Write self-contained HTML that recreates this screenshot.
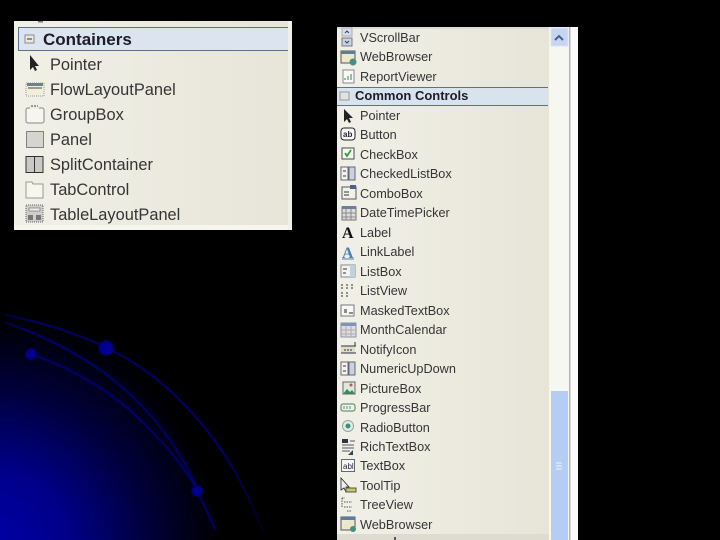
<!DOCTYPE html>
<html><head><meta charset="utf-8"><style>
html,body{margin:0;padding:0;background:#000;width:720px;height:540px;overflow:hidden}
body{position:relative;font-family:"Liberation Sans",sans-serif}
.t{position:absolute;white-space:nowrap;line-height:20px;color:#353535}
.l{font-size:16.400px;left:50px;filter:blur(.35px)}
.r{font-size:12.700px;left:360px;filter:blur(.35px)}
svg{position:absolute;left:0;top:0}
</style></head><body>
<svg width="720" height="540" viewBox="0 0 720 540">
<defs>
<radialGradient id="g" gradientUnits="userSpaceOnUse" cx="0" cy="0" r="1" gradientTransform="translate(-10 550) scale(230 235)">
<stop offset="0" stop-color="#0000a8"/><stop offset=".35" stop-color="#000088"/><stop offset=".7" stop-color="#000038"/><stop offset="1" stop-color="#000"/>
</radialGradient>
<radialGradient id="d"><stop offset="0" stop-color="#0000a0"/><stop offset=".7" stop-color="#000088"/><stop offset="1" stop-color="#000050"/></radialGradient>
<linearGradient id="lf" gradientUnits="userSpaceOnUse" x1="0" y1="0" x2="265" y2="0"><stop offset="0" stop-color="#000040"/><stop offset=".1" stop-color="#000078"/><stop offset=".85" stop-color="#000080"/><stop offset="1" stop-color="#000020"/></linearGradient>
<linearGradient id="pn" x1="0" x2="1" y1="0" y2="0"><stop offset="0" stop-color="#f1f0e7"/><stop offset="1" stop-color="#e7e5d8"/></linearGradient>
<filter id="b1"><feGaussianBlur stdDeviation=".6"/></filter>
<filter id="b2"><feGaussianBlur stdDeviation=".3"/></filter>
</defs>
<rect width="720" height="540" fill="#000"/>
<rect x="0" y="300" width="260" height="240" fill="url(#g)"/>
<g fill="none" stroke="url(#lf)" stroke-width="1.800" filter="url(#b1)">
<path d="M5 315 C70 328 120 350 155 378 C205 418 240 470 264 534"/>
<path d="M5 322 C55 340 100 365 133 397 C160 423 182 455 197 488"/>
<path d="M31 354 C70 368 105 388 133 413 C160 438 183 465 197 490 C203 503 209 515 215 530"/>
</g>
<circle cx="106" cy="348" r="8" fill="url(#d)"/>
<circle cx="31" cy="354" r="6" fill="url(#d)"/>
<circle cx="197" cy="491" r="6" fill="url(#d)"/>

<!-- left panel -->
<rect x="14" y="21" width="278" height="209" fill="url(#pn)"/>
<rect x="14" y="225" width="278" height="5" fill="#f6f6ef"/>
<rect x="38" y="21" width="5" height="1.500" fill="#777"/>
<rect x="18.500" y="27.500" width="272" height="23" fill="#dce5ef" stroke="#5d718c"/>
<rect x="288" y="21" width="4" height="209" fill="#f1f0e6"/>
<g filter="url(#b2)">
<rect x="25" y="35" width="9" height="8" fill="#e8e8e2" stroke="#8a8a88"/><path d="M27 39h5" stroke="#333"/>
<path d="M30 55v15l3-3 2 4 2-1-2-4h4z" fill="#222"/>
<rect x="26" y="83" width="18" height="13" fill="#f2efd8" stroke="#999" stroke-dasharray="1 1"/><rect x="27" y="83" width="16" height="3" fill="#6c7f9a"/><path d="M28 88h14" stroke="#445"/>
<rect x="26" y="108" width="18" height="15" rx="2" fill="#f6f5ef" stroke="#888"/><path d="M30 107h9" stroke="#ecebdf" stroke-width="3"/><path d="M31 106h7" stroke="#445" stroke-dasharray="2 1"/>
<rect x="26.500" y="131.500" width="17" height="16" fill="#d5d5d0"/><rect x="26.500" y="131.500" width="17" height="16" fill="none" stroke="#222" stroke-dasharray="1 1"/>
<rect x="26" y="156.500" width="17" height="16" fill="#c9c9c6" stroke="#333"/><path d="M34.500 156v17" stroke="#333"/>
<path d="M26 182h6l1 2h10v14H26z" fill="#f7f6ee" stroke="#9a9a92"/>
<rect x="26" y="205" width="17" height="17" fill="#cfcfc8" stroke="#666" stroke-dasharray="1 1"/><rect x="29" y="208" width="11" height="3" fill="#eee" stroke="#666" stroke-width=".6"/><rect x="28" y="215" width="5" height="5" fill="#777"/><rect x="36" y="215" width="5" height="5" fill="#777"/>
</g>

<!-- right panel -->
<rect x="337" y="27" width="241" height="513" fill="#fff"/>
<rect x="337" y="27" width="233" height="513" fill="#f7f7f2"/>
<rect x="337" y="27" width="212" height="513" fill="url(#pn)"/>
<rect x="337" y="27" width="212" height="2" fill="#dcdcd4"/>
<rect x="337" y="534" width="212" height="6" fill="#dedcd0"/>
<rect x="394" y="537" width="2" height="3" fill="#555"/>
<rect x="569" y="27" width="1.500" height="513" fill="#b5b5b0"/>
<rect x="570.500" y="27" width="7.500" height="513" fill="#fbfbfb"/>
<rect x="337" y="87.500" width="211" height="18" fill="#d9e3ee"/>
<path d="M337 87.500h211M337 105.500h211" stroke="#5d718c"/>
<rect x="551" y="28" width="17" height="18" fill="#c6d6f2" stroke="#d8e2f5"/><path d="M555 40l4-4 4 4" fill="none" stroke="#4d6185" stroke-width="2"/>
<rect x="551" y="391" width="17" height="149" fill="#b6cdf3"/><path d="M556 463h6M556 466h6M556 469h6" stroke="#eef3fc"/>

<g filter="url(#b2)">
<rect x="342" y="28" width="10" height="8" fill="#d8dfe8" stroke="#aab"/><rect x="342" y="38" width="10" height="8" fill="#c8d2e0" stroke="#778"/><path d="M345 33l2-2 2 2M345 41l2 2 2-2" fill="none" stroke="#345"/>
<rect x="341" y="51" width="14" height="12" fill="#ece8c8" stroke="#556"/><rect x="341" y="51" width="14" height="3" fill="#5a7ca6"/><circle cx="353" cy="62" r="3.500" fill="#4a8f80"/>
<rect x="343" y="70" width="11" height="13" fill="#f8f8f4" stroke="#889"/><path d="M345 80v-2M348 80v-4M351 80v-6" stroke="#3a7a5a"/>
<rect x="340" y="92" width="9" height="8" fill="#e2e2de" stroke="#999"/>
<path d="M344 109v13l3-3 2 4 2-1-2-4h4z" fill="#222"/>
<rect x="341" y="128" width="14" height="12" rx="3" fill="#fafaf6" stroke="#223"/>
<text x="343" y="137" font-size="8" font-family="Liberation Sans" font-weight="bold" fill="#223">ab</text>
<rect x="342" y="148" width="12" height="11" fill="#f8f8f0" stroke="#3f4f4f"/><path d="M345 153l2 3 4-6" fill="none" stroke="#2f9f3f" stroke-width="1.800"/>
<rect x="341" y="167" width="7" height="13" fill="#f5f5f0" stroke="#667"/><rect x="349" y="167" width="6" height="13" fill="#c9d3e0" stroke="#667"/><path d="M343 171h3M343 176h3" stroke="#333"/>
<rect x="342" y="187" width="14" height="12" fill="#f1f1ea" stroke="#556"/><rect x="350" y="185" width="6" height="4" fill="#4a6488"/><path d="M344 192h5M344 195h5" stroke="#333"/>
<rect x="342" y="207" width="14" height="13" fill="#dfdcd0" stroke="#777"/><rect x="342" y="206" width="14" height="3" fill="#6a7f9d"/><path d="M346 209v11M351 209v11M342 213h14M342 217h14" stroke="#889"/>
<text x="342" y="238" font-size="16" font-family="Liberation Serif" font-weight="bold" fill="#111">A</text>
<text x="342" y="258" font-size="16" font-family="Liberation Serif" font-weight="bold" fill="#4a80b8">A</text>
<path d="M342 259h12" stroke="#4a80b8"/>
<rect x="341" y="265" width="14" height="12" fill="#f4f4ee" stroke="#889"/><rect x="350" y="265" width="5" height="12" fill="#c5d0df"/><path d="M343 269h4M343 273h3" stroke="#333"/>
<path d="M341 285h2M346 285h2M351 285h2M341 288h2M346 288h2M351 288h2M341 293h2M346 293h2M341 296h2M346 296h2" stroke="#555" stroke-width="1.200"/>
<rect x="341" y="305" width="13" height="11" fill="#f8f8f3" stroke="#778"/><path d="M344 310h3M344 312h3M349 313h4" stroke="#222"/>
<rect x="341" y="323" width="15" height="14" fill="#e2dcd8" stroke="#8a93ab"/><rect x="341" y="323" width="15" height="3" fill="#7d95bd"/><path d="M346 326v11M351 326v11M341 330h15M341 334h15" stroke="#aab"/>
<rect x="341" y="346" width="14" height="7" fill="#e0dcc8"/><path d="M341 346h15M341 353h15M355 342v4" stroke="#334"/><path d="M344 350h8" stroke="#333" stroke-dasharray="2 1"/>
<rect x="341" y="362" width="7" height="13" fill="#f5f5f0" stroke="#667"/><rect x="349" y="362" width="6" height="13" fill="#c9d3e0" stroke="#667"/><path d="M343 366h3M343 371h3" stroke="#333"/>
<rect x="343" y="382" width="12" height="12" fill="#dfe8da" stroke="#667"/><path d="M343 394l4-5 3 3 2-2 3 4z" fill="#3e8a52"/><circle cx="351" cy="385" r="1.500" fill="#b05a5a"/>
<rect x="341" y="404" width="14" height="7" rx="2" fill="#f2f2e6" stroke="#4b7b64"/><path d="M344 406v3M347 406v3M350 406v3" stroke="#3f9f5f"/>
<circle cx="348" cy="426" r="5.500" fill="#e6ebe3" stroke="#8aa"/><circle cx="348" cy="426" r="2.500" fill="#3f8f6f"/>
<rect x="342" y="439" width="6" height="4" fill="#334"/><path d="M342 445h12M350 441h5M342 448h12M342 451h8" stroke="#556"/><path d="M348 455l5-5v5z" fill="#345"/>
<rect x="341.500" y="459.500" width="13" height="12" fill="#f8f8f4" stroke="#667"/>
<text x="343" y="469" font-size="8" font-family="Liberation Sans" fill="#223">abl</text>
<path d="M341 478v12l3-2 2 4 1-1-1-4h3z" fill="#eee" stroke="#222" stroke-width=".8"/><rect x="346" y="488" width="10" height="4" fill="#c9c96a" stroke="#554"/>
<path d="M342 498h3M344 502h8M344 507h8M347 511h5M342 498v10" stroke="#555" stroke-dasharray="1.500 1"/>
<rect x="341" y="517" width="14" height="13" fill="#ece8c8" stroke="#556"/><rect x="341" y="517" width="14" height="3" fill="#5a7ca6"/><circle cx="353" cy="529" r="3" fill="#4a8f80"/>
</g>
</svg>

<div class="t" style="left:43px;top:29px;font-size:17px;font-weight:bold;color:#1c1c2a;filter:blur(.3px);line-height:21px">Containers</div>
<div class="t l" style="top:55px">Pointer</div>
<div class="t l" style="top:80px">FlowLayoutPanel</div>
<div class="t l" style="top:105px">GroupBox</div>
<div class="t l" style="top:130px">Panel</div>
<div class="t l" style="top:155px">SplitContainer</div>
<div class="t l" style="top:180px">TabControl</div>
<div class="t l" style="top:205px">TableLayoutPanel</div>

<div class="t r" style="top:28px">VScrollBar</div>
<div class="t r" style="top:47px">WebBrowser</div>
<div class="t r" style="top:67px">ReportViewer</div>
<div class="t" style="left:355px;top:86px;font-size:13px;font-weight:bold;color:#1c1c2a;filter:blur(.3px)">Common Controls</div>
<div class="t r" style="top:106px">Pointer</div>
<div class="t r" style="top:125px">Button</div>
<div class="t r" style="top:145px">CheckBox</div>
<div class="t r" style="top:164px">CheckedListBox</div>
<div class="t r" style="top:184px">ComboBox</div>
<div class="t r" style="top:203px">DateTimePicker</div>
<div class="t r" style="top:223px">Label</div>
<div class="t r" style="top:242px">LinkLabel</div>
<div class="t r" style="top:262px">ListBox</div>
<div class="t r" style="top:281px">ListView</div>
<div class="t r" style="top:301px">MaskedTextBox</div>
<div class="t r" style="top:320px">MonthCalendar</div>
<div class="t r" style="top:340px">NotifyIcon</div>
<div class="t r" style="top:359px">NumericUpDown</div>
<div class="t r" style="top:379px">PictureBox</div>
<div class="t r" style="top:398px">ProgressBar</div>
<div class="t r" style="top:418px">RadioButton</div>
<div class="t r" style="top:437px">RichTextBox</div>
<div class="t r" style="top:456px">TextBox</div>
<div class="t r" style="top:476px">ToolTip</div>
<div class="t r" style="top:495px">TreeView</div>
<div class="t r" style="top:515px">WebBrowser</div>
</body></html>
